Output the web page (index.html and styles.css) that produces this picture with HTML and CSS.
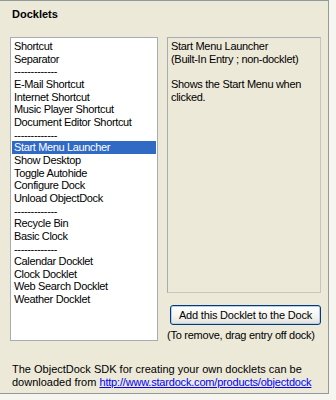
FILE: index.html
```html
<!DOCTYPE html>
<html lang="en">
<head>
  <meta charset="UTF-8" />
  <title>Docklets</title>
  <link rel="stylesheet" href="styles.css">
</head>
<body>

  <div class="page">
    <div class="title">Docklets</div>

    <div class="main">
      <ul class="listbox">
        <li>Shortcut</li>
        <li>Separator</li>
        <li>-------------</li>
        <li>E-Mail Shortcut</li>
        <li>Internet Shortcut</li>
        <li>Music Player Shortcut</li>
        <li>Document Editor Shortcut</li>
        <li>-------------</li>
        <li class="selected">Start Menu Launcher</li>
        <li>Show Desktop</li>
        <li>Toggle Autohide</li>
        <li>Configure Dock</li>
        <li>Unload ObjectDock</li>
        <li>-------------</li>
        <li>Recycle Bin</li>
        <li>Basic Clock</li>
        <li>-------------</li>
        <li>Calendar Docklet</li>
        <li>Clock Docklet</li>
        <li>Web Search Docklet</li>
        <li>Weather Docklet</li>
      </ul>

      <div class="side">
        <div class="info">
          <div>Start Menu Launcher</div>
          <div>(Built-In Entry ; non-docklet)</div>
          <div class="gap"></div>
          <div>Shows the Start Menu when clicked.</div>
        </div>
        <button class="add">Add this Docklet to the Dock</button>
        <div class="note">(To remove, drag entry off dock)</div>
      </div>
    </div>

    <p class="footer">
      <span class="line">The ObjectDock SDK for creating your own docklets can be</span>
      <span class="line">downloaded from <a href="#">http://www.stardock.com/products/objectdock</a></span>
    </p>
  </div>

</body>
</html>
```

FILE: styles.css
```css
body {
  margin: 0;
  background: #f6f5f0;
  font-family: "Liberation Sans", Arial, sans-serif;
  font-size: 11px;
  line-height: 12.65px;
  color: #000;
}

.page {
  box-sizing: border-box;
  width: 329px;
  height: 394px;
  background: #ece9d8;
  border: 1px solid #919b9c;
  border-left: none;
  padding: 7px 0 0 10px;
}

.title {
  font-weight: bold;
  font-size: 11px;
  line-height: 13px;
  padding-left: 2px;
}

.main {
  display: flex;
  gap: 9px;
  margin-top: 16px;
}

.listbox {
  box-sizing: border-box;
  width: 148px;
  height: 304px;
  margin: 0;
  padding: 2px 1px;
  list-style: none;
  background: #fff;
  border: 1px solid #a5acb2;
  letter-spacing: -0.35px;
}

.listbox li {
  padding-left: 2px;
  white-space: nowrap;
}

.listbox li.selected {
  background: #316ac5;
  color: #fff;
}

.side {
  width: 154px;
}

.info {
  box-sizing: border-box;
  height: 256px;
  padding: 2px 3px;
  border: 1px solid #a5acb2;
  border-right-color: #c8c6bb;
  border-bottom-color: #c8c6bb;
  letter-spacing: -0.3px;
}

.info .gap {
  height: 12.65px;
}

.add {
  display: block;
  box-sizing: border-box;
  width: 151px;
  height: 20px;
  margin: 12px 0 0 3px;
  padding: 0;
  font: inherit;
  letter-spacing: -0.18px;
  color: #000;
  border: 1px solid #003c74;
  border-radius: 3px;
  background: linear-gradient(#ffffff, #f4f3ee 60%, #e3e1d6);
  box-shadow: inset 0 0 0 1px #b6cdf2;
}

.note {
  margin-top: 4px;
  line-height: 13px;
  letter-spacing: -0.25px;
  white-space: nowrap;
}

.footer {
  margin: 21px 0 0 2px;
}

.footer .line {
  display: block;
  white-space: nowrap;
}

.footer a {
  color: #0000ff;
  letter-spacing: -0.19px;
}
```
